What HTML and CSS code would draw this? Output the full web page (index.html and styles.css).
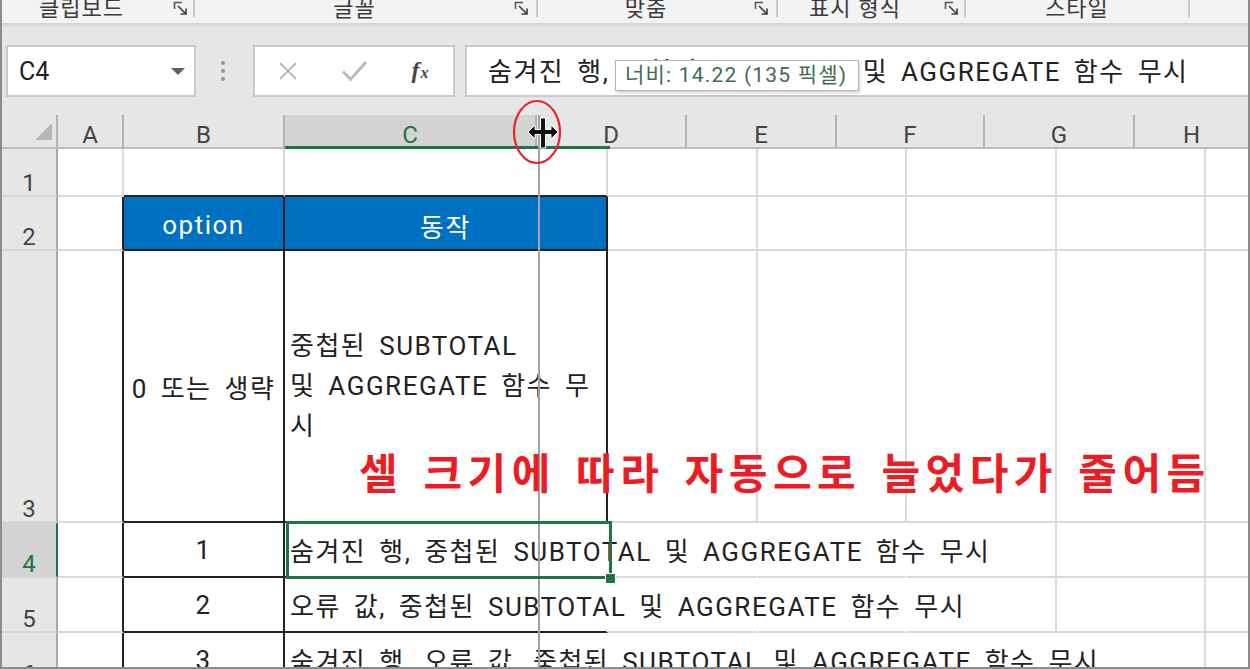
FILE: index.html
```html
<!DOCTYPE html>
<html lang="ko">
<head>
<meta charset="utf-8">
<title>Excel</title>
<link rel="stylesheet" href="styles.css">
</head>
<body>
<div class="app">
  <div class="ribbon">
    <div class="grp g1"><span class="lbl">클립보드</span><svg class="launch" viewBox="0 0 16 16"><path d="M1.5 9V2.5H9" fill="none" stroke="#555" stroke-width="1.6"/><path d="M5 6L13 14M13 8.5V14H7.5" fill="none" stroke="#444" stroke-width="1.7"/></svg></div>
    <div class="grp g2"><span class="lbl">글꼴</span><svg class="launch" viewBox="0 0 16 16"><path d="M1.5 9V2.5H9" fill="none" stroke="#555" stroke-width="1.6"/><path d="M5 6L13 14M13 8.5V14H7.5" fill="none" stroke="#444" stroke-width="1.7"/></svg></div>
    <div class="grp g3"><span class="lbl">맞춤</span><svg class="launch" viewBox="0 0 16 16"><path d="M1.5 9V2.5H9" fill="none" stroke="#555" stroke-width="1.6"/><path d="M5 6L13 14M13 8.5V14H7.5" fill="none" stroke="#444" stroke-width="1.7"/></svg></div>
    <div class="grp g4"><span class="lbl">표시 형식</span><svg class="launch" viewBox="0 0 16 16"><path d="M1.5 9V2.5H9" fill="none" stroke="#555" stroke-width="1.6"/><path d="M5 6L13 14M13 8.5V14H7.5" fill="none" stroke="#444" stroke-width="1.7"/></svg></div>
    <div class="grp g5"><span class="lbl">스타일</span></div>
  </div>

  <div class="fbar">
    <div class="namebox"><span>C4</span><span class="dd"></span></div>
    <div class="dots"><i></i><i></i><i></i></div>
    <div class="btns">
      <span><svg width="20" height="20" viewBox="0 0 20 20"><path d="M2 2L18 18M18 2L2 18" stroke="#a9a9a9" stroke-width="1.7"/></svg></span>
      <span><svg width="27" height="22" viewBox="0 0 27 22"><path d="M2 11.5L9.5 19.5L25 2" fill="none" stroke="#b9b9b9" stroke-width="2.8"/></svg></span>
      <span class="fx">f<span class="fxx">x</span></span>
    </div>
    <div class="finput"><span class="txt">숨겨진 행, 중첩된 SUBTOTAL 및 AGGREGATE 함수 무시</span></div>
  </div>

  <div class="colheads">
    <div class="ch corner"><svg width="17" height="17" viewBox="0 0 17 17"><path d="M17 0V17H0Z" fill="#b8b8b8"/></svg></div>
    <div class="ch w-a">A</div>
    <div class="ch w-b">B</div>
    <div class="ch w-c sel-h">C</div>
    <div class="ch w-d">D</div>
    <div class="ch w-e">E</div>
    <div class="ch w-f">F</div>
    <div class="ch w-g">G</div>
    <div class="ch w-h">H</div>
  </div>

  <div class="grid">
    <div class="c rh">1</div><div class="c"></div><div class="c bb"></div><div class="c bb"></div><div class="c"></div><div class="c"></div><div class="c"></div><div class="c"></div><div class="c last"></div>

    <div class="c rh">2</div><div class="c br"></div><div class="c hd br bb"><span class="txt">option</span></div><div class="c hd br bb"><span class="txt">동작</span></div><div class="c"></div><div class="c"></div><div class="c"></div><div class="c"></div><div class="c last"></div>

    <div class="c rh">3</div><div class="c br"></div><div class="c br bb ctr"><span class="txt">0 또는 생략</span></div><div class="c br bb wrap"><span class="txt">중첩된 SUBTOTAL<br>및 AGGREGATE 함수 무<br>시</span></div><div class="c"></div><div class="c"></div><div class="c"></div><div class="c"></div><div class="c last"></div>

    <div class="c rh rsel">4</div><div class="c br"></div><div class="c br bb ctr"><span class="txt">1</span></div><div class="c bb nr ov"><span class="txt">숨겨진 행, 중첩된 SUBTOTAL 및 AGGREGATE 함수 무시</span></div><div class="c nr"></div><div class="c nr"></div><div class="c"></div><div class="c"></div><div class="c last"></div>

    <div class="c rh">5</div><div class="c br"></div><div class="c br bb ctr"><span class="txt">2</span></div><div class="c bb nr ov"><span class="txt">오류 값, 중첩된 SUBTOTAL 및 AGGREGATE 함수 무시</span></div><div class="c nr"></div><div class="c nr"></div><div class="c"></div><div class="c"></div><div class="c last"></div>

    <div class="c rh">6</div><div class="c br"></div><div class="c br ctr"><span class="txt">3</span></div><div class="c nr ov"><span class="txt">숨겨진 행, 오류 값, 중첩된 SUBTOTAL 및 AGGREGATE 함수 무시</span></div><div class="c nr"></div><div class="c nr"></div><div class="c nr"></div><div class="c"></div><div class="c last"></div>
  </div>

  <div class="hdr-line"></div>
  <div class="guide"></div>
  <div class="sel"></div>
  <div class="handle"></div>
  <div class="note">셀 크기에 따라 자동으로 늘었다가 줄어듬</div>
  <svg class="ring" width="50" height="66" viewBox="0 0 50 66"><ellipse cx="25" cy="33" rx="23" ry="31" fill="none" stroke="#e5232a" stroke-width="2.2"/></svg>
  <svg class="cursor" width="38" height="36" viewBox="0 0 38 36"><path d="M3 17L10 10V14.5H15.5V3H20.5V14.5H26V10L33 17L26 24V19.5H20.5V33H15.5V19.5H10V24Z" fill="#111" stroke="#fff" stroke-width="1"/></svg>
  <div class="tooltip">너비: 14.22 (135 픽셀)</div>
</div>
</body>
</html>
```

FILE: styles.css
```css
* { box-sizing: border-box; }
html, body { margin: 0; padding: 0; }
body {
  width: 1250px;
  height: 669px;
  overflow: hidden;
  background: #fff;
  font-family: Roboto, "Noto Sans CJK KR", sans-serif;
}
.app {
  position: relative;
  width: 1250px;
  height: 669px;
  border: 2px solid #8c8c8c;
  border-top: 0;
  overflow: hidden;
  background: #fff;
}

/* ribbon group labels */
.ribbon {
  position: relative;
  z-index: 2;
  height: 24px;
  background: #f3f3f3;
  border-bottom: 1px solid #d5d5d5;
  box-shadow: 0 2px 3px rgba(0,0,0,0.07);
  display: flex;
  align-items: flex-start;
}
.grp {
  display: flex;
  align-items: flex-start;
  height: 17px;
  border-right: 2px solid #c9c9c9;
  flex: none;
}
.g1 { width: 193px; }
.g2 { width: 343px; }
.g3 { width: 240px; }
.g4 { width: 188px; }
.g5 { width: 224px; }
.lbl {
  flex: 1;
  text-align: center;
  font-family: "Noto Sans CJK KR", sans-serif;
  font-size: 22px;
  line-height: 22px;
  margin-top: -5px;
  letter-spacing: 1px;
  color: #3a3a3a;
  white-space: nowrap;
}
.g1 .lbl { padding-right: 12px; }
.g4 .lbl { padding-right: 12px; }
.launch { width: 16px; height: 16px; flex: none; }
.g1 .launch { margin-right: 4px; }
.g2 .launch { margin-right: 6px; }
.g3 .launch { margin-right: 6px; }
.g4 .launch { margin-right: 4px; }

/* formula bar */
.fbar {
  height: 91px;
  background: #e6e6e6;
  display: flex;
  align-items: flex-start;
  padding: 21px 0 0 4px;
}
.namebox {
  width: 190px;
  height: 52px;
  flex: none;
  background: #fff;
  border: 2px solid #c9c9c9;
  display: flex;
  align-items: center;
  padding-left: 11px;
  font-size: 25px;
  color: #222;
}
.dd {
  margin-left: auto;
  margin-right: 9px;
  width: 0;
  height: 0;
  border-left: 7px solid transparent;
  border-right: 7px solid transparent;
  border-top: 7px solid #5f5f5f;
}
.dots {
  margin-left: 25px;
  width: 4px;
  flex: none;
  display: flex;
  flex-direction: column;
  gap: 4px;
  padding-top: 16px;
}
.dots i { display: block; width: 4px; height: 4px; border-radius: 50%; background: #919191; }
.btns {
  margin-left: 28px;
  width: 202px;
  height: 52px;
  flex: none;
  background: #fff;
  border: 2px solid #c9c9c9;
  display: flex;
}
.btns > span {
  width: 66px;
  display: flex;
  align-items: center;
  justify-content: center;
}
.fx {
  font-family: "Liberation Serif", serif;
  font-style: italic;
  font-weight: bold;
  font-size: 24px;
  color: #454545;
  padding-bottom: 2px;
}
.fxx { font-size: 16px; position: relative; top: 3px; margin-left: 1px; }
.finput {
  margin-left: 10px;
  flex: 1;
  height: 52px;
  background: #fff;
  border: 2px solid #c9c9c9;
  border-right: 0;
  display: flex;
  align-items: center;
  padding: 0 0 4px 21px;
  font-size: 26px;
  color: #222;
  white-space: nowrap;
}
.txt { letter-spacing: 1.5px; word-spacing: 5px; }

/* column headers */
.colheads {
  display: flex;
  height: 34px;
  background: #e6e6e6;
  border-bottom: 2px solid #bcbcbc;
}
.ch {
  flex: none;
  border-right: 2px solid #b3b3b3;
  text-align: center;
  font-size: 24px;
  line-height: 40px;
  color: #444;
}
.corner {
  width: 56px;
  display: flex;
  justify-content: flex-end;
  align-items: flex-end;
  padding: 0 4px 7px 0;
}
.w-a { width: 66px; }
.w-b { width: 161px; }
.w-c { width: 252px; }
.w-d { width: 150px; }
.w-e { width: 150px; }
.w-f { width: 148px; }
.w-g { width: 150px; }
.w-h { flex: 1; border-right: 0; }
.sel-h { background: #d3d3d3; color: #217346; }

/* cells */
.grid {
  display: grid;
  grid-template-columns: 56px 66px 161px 323px 150px 149px 150px 149px 1fr;
  grid-template-rows: 48px 54px 272px 55px 55px 55px;
}
.c {
  min-width: 0;
  border-right: 2px solid #d9d9d9;
  border-bottom: 2px solid #d9d9d9;
  display: flex;
  align-items: center;
  padding-left: 5px;
  font-size: 26px;
  color: #222;
  white-space: nowrap;
}
.c.last { border-right: 0; }
.rh {
  background: #e6e6e6;
  border-right-color: #a9a9a9;
  border-bottom-color: #d6d6d6;
  justify-content: center;
  align-items: flex-end;
  padding-left: 0;
  font-size: 24px;
  line-height: 24px;
  color: #444;
}
.rh.rsel { background: #d3d3d3; border-right-color: #217346; color: #217346; }
.br { border-right-color: #222; }
.bb { border-bottom-color: #222; }
.nr { border-right-color: transparent; }
.ctr { justify-content: center; padding-left: 0; }
.hd {
  background: #0070c0;
  color: #fff;
  justify-content: center;
  padding: 4px 0 0 0;
}
.wrap { line-height: 40px; align-items: center; }
.ov { overflow: visible; position: relative; z-index: 1; }

/* overlays */
.hdr-line {
  position: absolute;
  left: 283px;
  top: 146px;
  width: 325px;
  height: 3px;
  background: #217346;
  z-index: 3;
}
.guide {
  position: absolute;
  left: 536px;
  top: 115px;
  width: 2px;
  height: 560px;
  background: #a3a3a3;
  z-index: 4;
}
.sel {
  position: absolute;
  left: 284px;
  top: 521px;
  width: 326px;
  height: 58px;
  border: 3px solid #217346;
  z-index: 5;
}
.handle {
  position: absolute;
  left: 603px;
  top: 573px;
  width: 11px;
  height: 11px;
  background: #217346;
  border: 1px solid #fff;
  z-index: 6;
}
.note {
  position: absolute;
  left: 357px;
  top: 445px;
  font-family: "Noto Sans CJK KR", sans-serif;
  font-weight: bold;
  font-size: 42px;
  line-height: 52px;
  letter-spacing: 5.5px;
  word-spacing: 3px;
  color: #ec1c24;
  white-space: nowrap;
  z-index: 7;
}
.ring {
  position: absolute;
  left: 510px;
  top: 99px;
  z-index: 8;
}
.cursor {
  position: absolute;
  left: 523px;
  top: 115px;
  z-index: 9;
}
.tooltip {
  position: absolute;
  left: 613px;
  top: 60px;
  width: 244px;
  height: 31px;
  background: #fff;
  border: 1px solid #b5b5b5;
  box-shadow: 1px 2px 3px rgba(0,0,0,0.18);
  padding-left: 9px;
  font-size: 21px;
  line-height: 29px;
  letter-spacing: 1.2px;
  color: #3f6c52;
  white-space: nowrap;
  z-index: 10;
}
```
